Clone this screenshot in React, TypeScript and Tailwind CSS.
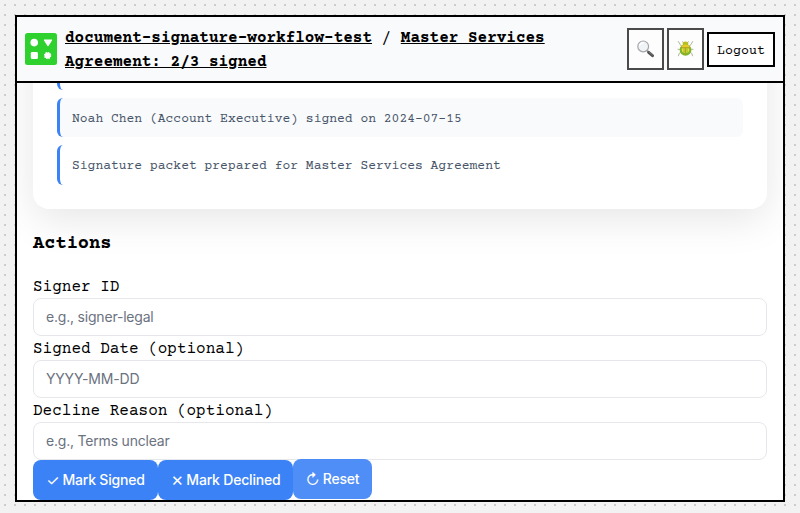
import React from "react";

const inter = "font-['Inter','Liberation_Sans',sans-serif]";

function Logo() {
  return (
    <svg className="size-8 shrink-0" viewBox="0 0 32 32" fill="white">
      <rect width="32" height="32" rx="2.5" fill="#2fd12f" />
      <circle cx="9.2" cy="9.6" r="3.8" />
      <path d="M19.3 6.4h7.2c.6 0 .8.5.5 1l-3.3 5.3c-.4.6-1.1.6-1.4 0L19 7.4c-.3-.5 0-1 .3-1Z" />
      <rect x="5.8" y="19" width="7.1" height="7.1" rx="1.3" />
      <circle cx="22.6" cy="22.6" r="3" />
      <circle cx="22.6" cy="22.6" r="3" fill="none" stroke="white" strokeWidth="1.4" strokeDasharray="1.35 1" />
    </svg>
  );
}

function Magnifier() {
  return (
    <svg className="size-[18px]" viewBox="0 0 18 18" fill="none">
      <path d="m10 10.5 2 2" stroke="#8b8b8b" strokeWidth="1.6" />
      <path d="m11.6 12.4 3.9 3.3" stroke="#505050" strokeWidth="2.9" strokeLinecap="round" />
      <path d="m12.1 12 3.4 2.9" stroke="#858585" strokeWidth=".8" strokeLinecap="round" />
      <circle cx="6.2" cy="6.4" r="5.4" fill="#f1f4f7" stroke="#a5a5aa" strokeWidth="1.2" />
      <path d="M2.6 6a3.7 3.7 0 0 1 4-3.2" stroke="white" strokeWidth="1.2" />
    </svg>
  );
}

function Beetle() {
  return (
    <svg className="size-[18px]" viewBox="0 0 18 18" fill="none">
      <g stroke="#a6b087" strokeWidth=".9" strokeLinecap="round" strokeLinejoin="round">
        <path d="M4.6 6.5 3 4.2 1.3 1.5M12.4 6.5 14 4.2l1.7-2.7M3.5 9.3H1M13.5 9.3H16M4 12.4l-1.7.8-.8 2.6M13 12.4l1.7.8.8 2.6M6.6 2.8 5.4 1.7M10.4 2.8l1.2-1.1" />
      </g>
      <ellipse cx="8.5" cy="3.8" rx="2.8" ry="2.4" fill="#b8bd20" />
      <ellipse cx="8.5" cy="9.9" rx="5.9" ry="5.8" fill="#7eb52b" />
      <ellipse cx="8.5" cy="9.1" rx="4" ry="4.2" fill="#b9c92f" />
      <path d="M4.4 6Q8.5 2.6 12.6 6L12 7.6H5Z" fill="#e8ca27" />
      <path d="M3.6 7.6h9.8M8.5 7.6v7.4" stroke="#b39a24" strokeWidth=".8" />
      <path d="M5.6 8.8v2.6M11.4 8.8v2.6" stroke="#f2df45" strokeWidth="1.1" />
    </svg>
  );
}

function Header() {
  const iconButton = "flex h-[42px] w-[37px] items-center justify-center border-2 border-[#4a4a4a] bg-[#fdfdfd]";
  return (
    <header className="flex h-[66px] shrink-0 items-center gap-2 border-b-2 border-black bg-[#f9fafc] px-2">
      <Logo />
      <div className="w-[500px] pt-0.5 leading-6">
        <a className="font-bold underline">document-signature-workflow-test</a> /{" "}
        <a className="font-bold underline">Master Services Agreement: 2/3 signed</a>
      </div>
      <div className="ml-auto flex items-center gap-[3px]">
        <button className={iconButton} aria-label="Search"><Magnifier /></button>
        <button className={iconButton} aria-label="Debug"><Beetle /></button>
        <button className="h-[35px] w-[68px] border-2 border-black bg-white pt-1.5 text-[13.333px]">Logout</button>
      </div>
    </header>
  );
}

function Entry({ text, shaded = false }: { text: string; shaded?: boolean }) {
  return (
    <div className={`rounded-md border-l-[3px] border-[#3b82f6] px-3 text-[13px] leading-[19.5px] text-[#475569] ${shaded ? "bg-[#f9fafc] pt-3 pb-2" : "bg-white pt-[11.3px] pb-[8.7px]"}`}>
      {text}
    </div>
  );
}

function Field({ label, placeholder }: { label: string; placeholder: string }) {
  return (
    <label className="block shrink-0">
      <span className="block h-6 pt-px leading-6">{label}</span>
      <input
        placeholder={placeholder}
        className={`block h-[38px] w-full rounded-lg border border-[#e5e7eb] bg-white px-3 pb-0.5 text-sm tracking-[-0.2px] placeholder:text-[#6b7280] ${inter}`}
      />
    </label>
  );
}

function Glyph({ children }: { children: string }) {
  return <span className="text-[15px] leading-none font-normal">{children}</span>;
}

export default function App() {
  const action = `flex h-10 items-center justify-center gap-[3px] rounded-lg bg-[#3b82f6] text-sm font-medium tracking-[-0.2px] text-white ${inter}`;
  return (
    <div className="h-[513px] w-[800px] overflow-hidden bg-[#f2f2f2] bg-[conic-gradient(from_270deg_at_2px_2px,#ccc_90deg,transparent_90deg)] bg-[length:10px_10px] bg-[position:4px_4px] p-[15px] font-['Courier_Prime','Courier_New','Liberation_Mono',monospace] text-base text-black">
      <div className="flex h-[487px] w-[770px] flex-col overflow-hidden border-2 border-black bg-white">
        <Header />
        <main className="flex min-h-0 flex-1 flex-col justify-end overflow-hidden px-4">
          <section className="flex shrink-0 flex-col gap-2 rounded-2xl bg-white p-6 shadow-[0_10px_40px_rgba(0,0,0,0.1)]">
            <Entry text="Elena Torres (Procurement Lead) signed on 2024-07-16" />
            <Entry text="Noah Chen (Account Executive) signed on 2024-07-15" shaded />
            <Entry text="Signature packet prepared for Master Services Agreement" />
          </section>
          <h3 className="mt-[23.2px] mb-[18px] text-[18.72px] leading-6 font-bold">Actions</h3>
          <Field label="Signer ID" placeholder="e.g., signer-legal" />
          <Field label="Signed Date (optional)" placeholder="YYYY-MM-DD" />
          <Field label="Decline Reason (optional)" placeholder="e.g., Terms unclear" />
          <div className="flex shrink-0">
            <button className={`${action} w-[125px]`}><Glyph>✓</Glyph>Mark Signed</button>
            <button className={`${action} w-[135px]`}><Glyph>✕</Glyph>Mark Declined</button>
            <button className={`${action} w-[79px] -translate-y-px opacity-90`}><Glyph>↻</Glyph>Reset</button>
          </div>
        </main>
      </div>
    </div>
  );
}
